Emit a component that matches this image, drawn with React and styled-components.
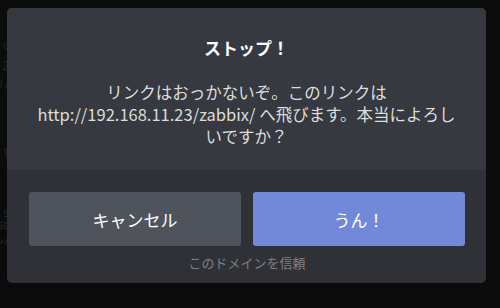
import React from 'react'
import styled, { createGlobalStyle } from 'styled-components'

const GlobalStyle = createGlobalStyle`
  html, body {
    margin: 0;
    padding: 0;
    background: #0b0b0c;
  }
  body {
    font-family: "Noto Sans", "Noto Sans CJK JP", sans-serif;
  }
`

// bits of the page that peek out from behind the modal
const behind = [
  { text: 'c', gap: 0, blue: true },
  { text: '2', gap: 9 },
  { text: 'リ/', gap: 7 },
  { text: '1', gap: 56 },
  { text: 's', gap: 48, blue: true },
  { text: 'sc', gap: 0 },
  { text: 'ル/', gap: 3 },
]

const App = () => {
  return (
    <Page>
      <GlobalStyle />
      <Underlay>
        {behind.map((b, i) => (
          <Ghost key={i} $blue={b.blue} $gap={b.gap}>
            {b.text}
          </Ghost>
        ))}
      </Underlay>
      <Modal>
        <Top>
          <Title>ストップ！</Title>
          <Body>
            リンクはおっかないぞ。このリンクは
            <br />
            http://192.168.11.23/zabbix/ へ飛びます。本当によろし
            <br />
            いですか？
          </Body>
        </Top>
        <Bottom>
          <Buttons>
            <Button>キャンセル</Button>
            <Button $primary>うん！</Button>
          </Buttons>
          <Trust>このドメインを信頼</Trust>
        </Bottom>
      </Modal>
    </Page>
  )
}

export default App

const Page = styled.div`
  position: relative;
  width: 500px;
  height: 308px;
  overflow: hidden;
  background: #0b0b0c;
`

const Underlay = styled.div`
  display: flex;
  flex-direction: column;
  align-items: flex-end;
  width: 9px;
  padding-top: 39px;
  overflow: hidden;
`

const Ghost = styled.div`
  margin-top: ${({ $gap }) => $gap}px;
  font-size: 12px;
  line-height: 12px;
  white-space: nowrap;
  color: ${({ $blue }) => ($blue ? '#0d2631' : '#232426')};
`

const Modal = styled.div`
  position: absolute;
  left: 7px;
  top: 8px;
  width: 479px;
  height: 275px;
  display: flex;
  flex-direction: column;
  border-radius: 5px;
  overflow: hidden;
  background: #2f3136;
  font-family: "Noto Sans CJK JP", "Noto Sans", sans-serif;
`

const Top = styled.div`
  height: 162px;
  box-sizing: border-box;
  padding: 29px 16px 0;
  background: #36393f;
  text-align: center;
`

const Title = styled.h2`
  margin: 0;
  font-size: 17px;
  line-height: 22px;
  font-weight: 700;
  color: #ffffff;
`

const Body = styled.p`
  margin: 22px 0 0;
  font-size: 16.5px;
  line-height: 22px;
  color: #dcddde;
  white-space: nowrap;
`

const Bottom = styled.div`
  flex: 1;
  display: flex;
  flex-direction: column;
  align-items: center;
  padding: 22px 21px 0 22px;
`

const Buttons = styled.div`
  display: grid;
  grid-template-columns: 1fr 1fr;
  gap: 12px;
  width: 100%;
`

const Button = styled.button`
  height: 54px;
  border: none;
  border-radius: 3px;
  font-family: inherit;
  font-size: 17px;
  font-weight: 400;
  color: #ffffff;
  background: ${({ $primary }) => ($primary ? '#7289da' : '#4f545c')};
  cursor: pointer;
`

const Trust = styled.div`
  margin-top: 9px;
  font-size: 13px;
  line-height: 16px;
  color: #7c8086;
`
